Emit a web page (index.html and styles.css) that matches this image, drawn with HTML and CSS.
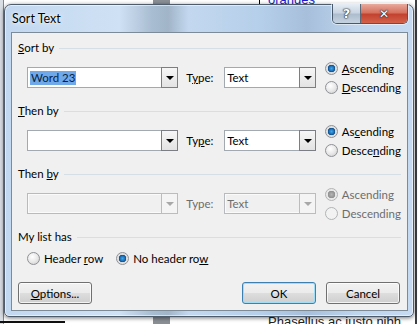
FILE: index.html
```html
<!DOCTYPE html>
<html lang="en">
<head>
  <meta charset="UTF-8">
  <title>Sort Text</title>
  <link rel="stylesheet" href="styles.css">
</head>
<body>
  <div class="desk">
    <div class="doc-side"></div>
    <div class="doc-line"></div>
    <span class="doc-word">oranges</span>
    <div class="doc-bar"></div>
    <div class="doc-edge"></div>
    <div class="doc-foot"></div>
    <p class="doc-text">Phasellus ac justo nibh, at al</p>

    <div class="window">
      <div class="titlebar">
        <span class="title">Sort Text</span>
        <div class="caption-btns">
          <span class="cap help">?</span>
          <span class="cap close">&#x2715;</span>
        </div>
      </div>

      <div class="client">
        <section class="group">
          <div class="group-head"><span><u>S</u>ort by</span></div>
          <div class="row">
            <div class="combo wide"><span class="value"><span class="sel">Word 23</span></span><span class="drop"></span></div>
            <span class="type-label">T<u>y</u>pe:</span>
            <div class="combo narrow"><span class="value">Text</span><span class="drop"></span></div>
            <div class="radios">
              <label class="radio"><span class="dot on"></span><span><u>A</u>scending</span></label>
              <label class="radio"><span class="dot"></span><span><u>D</u>escending</span></label>
            </div>
          </div>
        </section>

        <section class="group">
          <div class="group-head"><span><u>T</u>hen by</span></div>
          <div class="row">
            <div class="combo wide"><span class="value"></span><span class="drop"></span></div>
            <span class="type-label">Ty<u>p</u>e:</span>
            <div class="combo narrow"><span class="value">Text</span><span class="drop"></span></div>
            <div class="radios">
              <label class="radio"><span class="dot on"></span><span>As<u>c</u>ending</span></label>
              <label class="radio"><span class="dot"></span><span>Desce<u>n</u>ding</span></label>
            </div>
          </div>
        </section>

        <section class="group disabled">
          <div class="group-head"><span>Then <u>b</u>y</span></div>
          <div class="row">
            <div class="combo wide"><span class="value"></span><span class="drop"></span></div>
            <span class="type-label">Type:</span>
            <div class="combo narrow"><span class="value">Text</span><span class="drop"></span></div>
            <div class="radios">
              <label class="radio"><span class="dot on"></span><span>Ascending</span></label>
              <label class="radio"><span class="dot"></span><span>Descending</span></label>
            </div>
          </div>
        </section>

        <section class="group last">
          <div class="group-head"><span>My list has</span></div>
          <div class="row header-row">
            <label class="radio"><span class="dot"></span><span>Header <u>r</u>ow</span></label>
            <label class="radio"><span class="dot on"></span><span>No header ro<u>w</u></span></label>
          </div>
        </section>

        <div class="buttons">
          <button class="btn"><u>O</u>ptions...</button>
          <span class="spacer"></span>
          <button class="btn default">OK</button>
          <button class="btn">Cancel</button>
        </div>
      </div>
    </div>
  </div>
</body>
</html>
```

FILE: styles.css
```css
body {
  margin: 0;
  font-family: Lato, "Liberation Sans", sans-serif;
  font-size: 11.5px;
  color: #000;
}
.desk {
  position: relative;
  width: 418px;
  height: 324px;
  overflow: hidden;
  background: #fff;
}
.doc-side {
  position: absolute;
  left: 0;
  top: 0;
  width: 3px;
  height: 324px;
  background: #d9dee4;
  border-right: 1px solid #7e8790;
}
.doc-line {
  position: absolute;
  left: 259px;
  top: 0;
  width: 1px;
  height: 8px;
  background: #000;
}
.doc-word {
  position: absolute;
  left: 268px;
  top: -8px;
  color: #1a1ac8;
  text-decoration: underline;
  font-family: "Liberation Sans", sans-serif;
  font-size: 13px;
}
.doc-bar {
  position: absolute;
  left: 153px;
  top: 0;
  width: 17px;
  height: 324px;
  background: #8a8f96;
}
.doc-edge {
  position: absolute;
  left: 415px;
  top: 0;
  width: 2px;
  height: 324px;
  background: #3c3f44;
}
.doc-foot {
  position: absolute;
  left: 0;
  top: 321px;
  width: 65px;
  height: 2px;
  background: #111;
}
.doc-text {
  position: absolute;
  left: 268px;
  top: 314px;
  margin: 0;
  font-family: "Liberation Sans", sans-serif;
  font-size: 13px;
  color: #222;
}

/* window frame */
.window {
  position: absolute;
  left: 4px;
  top: 4px;
  width: 410px;
  height: 313px;
  box-sizing: border-box;
  border: 1px solid #4d5b6b;
  border-radius: 7px 7px 5px 5px;
  background: linear-gradient(to right, #c2d8f0 0, #cfe1f4 28%, #a9bdd2 36%, #a1b4c8 40%, #c3d8ef 45%, #b6cfea 62%, #a7bfdb 74%, #bfd5ee 86%, #c6dbf2 100%);
  box-shadow: inset 0 0 0 1px rgba(255, 255, 255, 0.55), 0 1px 4px rgba(0, 0, 0, 0.55);
  display: flex;
  flex-direction: column;
}
.titlebar {
  position: relative;
  height: 27px;
  display: flex;
  align-items: center;
  padding-left: 7px;
}
.title {
  font-size: 12.5px;
  text-shadow: 0 0 6px rgba(255, 255, 255, 0.95), 0 0 2px rgba(255, 255, 255, 0.9);
}
.caption-btns {
  position: absolute;
  right: 5px;
  top: -1px;
  display: flex;
  height: 19px;
  border: 1px solid #49596b;
  border-top: none;
  border-radius: 0 0 5px 5px;
  overflow: hidden;
  box-shadow: 0 0 0 1px rgba(255, 255, 255, 0.5);
}
.cap {
  display: flex;
  align-items: center;
  justify-content: center;
  color: #fff;
  font-family: "DejaVu Sans", sans-serif;
  font-weight: bold;
  text-shadow: 0 0 1px #222, 0 0 1px #222, 0 0 2px #333;
}
.help {
  width: 27px;
  font-size: 13px;
  background: linear-gradient(#e6edf5 0, #c9d5e2 45%, #aebdcd 55%, #c5d3e1 100%);
  border-right: 1px solid #5a6878;
}
.close {
  width: 46px;
  font-size: 12px;
  background: linear-gradient(#e7aa9c 0, #d7725f 45%, #c24330 55%, #d3624a 100%);
}

/* client area */
.client {
  flex: 1;
  margin: 0 5px 5px 6px;
  border: 1px solid #7d8a98;
  background: #f0f0f0;
  padding: 8px 6px 5px 6px;
  display: flex;
  flex-direction: column;
}
.group {
  height: 63px;
}
.group.last {
  height: 52px;
}
.group-head {
  display: flex;
  align-items: center;
  gap: 5px;
  height: 14px;
  line-height: 14px;
}
.group-head::after {
  content: "";
  flex: 1;
  height: 1px;
  background: #d5dfe5;
}
.row {
  display: flex;
  align-items: flex-start;
  margin-top: 12px;
}
.combo {
  position: relative;
  display: flex;
  height: 21px;
  box-sizing: border-box;
  border: 1px solid #a3a9b1;
  background: #fff;
}
.combo.wide {
  width: 152px;
  margin-left: 9px;
}
.combo.narrow {
  width: 92px;
}
.value {
  flex: 1;
  display: flex;
  align-items: center;
  padding-left: 2px;
}
.sel {
  background: #6fa9ea;
  color: #0b1f3d;
  padding: 0 1px;
  line-height: 14px;
}
.drop {
  position: relative;
  width: 17px;
  margin: -1px -1px -1px 0;
  box-sizing: border-box;
  border: 1px solid #7b7f85;
  background: linear-gradient(#f6f6f6, #e3e3e3);
}
.drop::after {
  content: "";
  position: absolute;
  left: 4px;
  top: 8px;
  border-left: 4px solid transparent;
  border-right: 4px solid transparent;
  border-top: 4px solid #000;
}
.type-label {
  width: 38px;
  margin-left: 8px;
  line-height: 21px;
}
.radios {
  margin-left: 9px;
  margin-top: -8px;
  display: flex;
  flex-direction: column;
}
.radio {
  display: flex;
  align-items: center;
  height: 19px;
  gap: 4px;
}
.dot {
  width: 13px;
  height: 13px;
  box-sizing: border-box;
  border-radius: 50%;
  border: 1px solid #8e9196;
  background: radial-gradient(circle at 40% 35%, #fff 0, #e9e9e9 50%, #c9c9c9 100%);
}
.dot.on {
  background: radial-gradient(circle, #3fa9e9 0, #1e6fb8 2.5px, #0d4a86 3.5px, #dcdcdc 4px, #f2f2f2 100%);
}
.header-row {
  margin-top: 5px;
  padding-left: 9px;
  gap: 13px;
}

/* disabled group */
.disabled {
  color: #6d6d6d;
}
.disabled .group-head {
  color: #000;
}
.disabled .combo {
  background: #f0f0f0;
  border-color: #b7babe;
  box-shadow: inset 0 0 0 1px #fafafa;
}
.disabled .drop {
  border-color: #b9bcc0;
  background: #f4f4f4;
}
.disabled .drop::after {
  border-top-color: #a8a8a8;
}
.disabled .dot {
  border-color: #b1b3b5;
  background: #f2f2f2;
}
.disabled .dot.on {
  background: radial-gradient(circle, #b6b6b6 0, #8f8f8f 3.5px, #e6e6e6 4px, #f2f2f2 100%);
}

/* buttons */
.buttons {
  display: flex;
  gap: 10px;
  margin-right: 1px;
}
.spacer {
  flex: 1;
}
.btn {
  width: 74px;
  height: 22px;
  margin: 0;
  padding: 0;
  font: inherit;
  color: #000;
  border: 1px solid #707070;
  border-radius: 3px;
  background: linear-gradient(#f2f2f2 0, #ebebeb 48%, #dddddd 52%, #cfcfcf 100%);
  box-shadow: inset 0 0 0 1px rgba(255, 255, 255, 0.75);
}
.btn.default {
  border-color: #3c7fb1;
  box-shadow: inset 0 0 0 1px #9fdcf7;
}
```
